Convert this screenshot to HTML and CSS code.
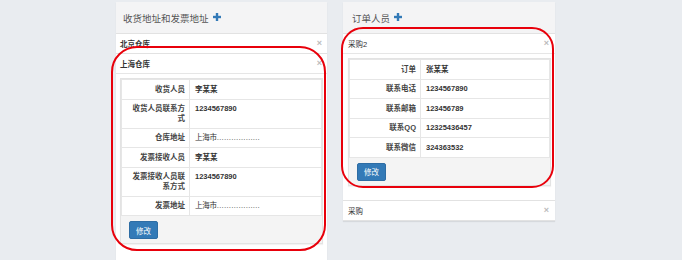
FILE: index.html
```html
<!DOCTYPE html>
<html lang="zh-CN">
<head>
<meta charset="UTF-8" />
<title>地址与订单人员</title>
<link rel="stylesheet" href="styles.css">
</head>
<body>
<div class="page">
  <section class="box box-left">
    <div class="box-header">
      <span>收货地址和发票地址</span>
      <svg class="plus" viewBox="0 0 8 8" width="8" height="8"><rect x="2.8" y="0" width="2.4" height="8"/><rect x="0" y="2.8" width="8" height="2.4"/></svg>
    </div>
    <div class="item">
      <div class="item-head"><span class="title">北京仓库</span><span class="close">×</span></div>
    </div>
    <div class="item open">
      <div class="item-head"><span class="title">上海仓库</span><span class="close">×</span></div>
      <div class="item-body">
        <div class="well">
          <table class="info">
            <tr><th>收货人员</th><td>李某某</td></tr>
            <tr><th>收货人员联系方式</th><td>1234567890</td></tr>
            <tr><th>仓库地址</th><td class="addr">上海市………………</td></tr>
            <tr><th>发票接收人员</th><td>李某某</td></tr>
            <tr><th>发票接收人员联系方式</th><td>1234567890</td></tr>
            <tr><th>发票地址</th><td class="addr">上海市………………</td></tr>
          </table>
          <div class="actions"><button class="btn">修改</button></div>
        </div>
      </div>
    </div>
  </section>

  <section class="box box-right">
    <div class="box-header">
      <span>订单人员</span>
      <svg class="plus" viewBox="0 0 8 8" width="8" height="8"><rect x="2.8" y="0" width="2.4" height="8"/><rect x="0" y="2.8" width="8" height="2.4"/></svg>
    </div>
    <div class="item open">
      <div class="item-head"><span class="title light">采购2</span><span class="close">×</span></div>
      <div class="item-body">
        <div class="well">
          <table class="info info-right">
            <tr><th>订单</th><td>张某某</td></tr>
            <tr><th>联系电话</th><td>1234567890</td></tr>
            <tr><th>联系邮箱</th><td>123456789</td></tr>
            <tr><th>联系QQ</th><td>12325436457</td></tr>
            <tr><th>联系微信</th><td>324363532</td></tr>
          </table>
          <div class="actions"><button class="btn">修改</button></div>
        </div>
      </div>
    </div>
    <div class="item spaced">
      <div class="item-head"><span class="title light">采购</span><span class="close">×</span></div>
    </div>
  </section>
</div>

<!-- Markierungen -->
<div class="mark mark-left"></div>
<div class="mark mark-right"></div>
</body>
</html>
```

FILE: styles.css
```css
body {
  margin: 0;
  background: #e9ecf0;
  font-family: "Liberation Sans", "Noto Sans CJK SC", sans-serif;
  color: #333;
  font-size: 7.5px;
  height: 260px;
  overflow: hidden;
}
.page {
  display: flex;
  align-items: flex-start;
  gap: 16px;
  padding: 2px 0 0 116px;
}
.box {
  background: #fff;
  box-shadow: 0 1px 1px rgba(0,0,0,0.08);
}
.box-left {
  width: 211px;
  min-height: 300px;
}
.box-right {
  width: 212px;
}
.box-header {
  height: 31px;
  background: #f4f4f5;
  display: flex;
  align-items: center;
  gap: 4px;
  padding: 0 7px;
  font-size: 9.5px;
  color: #555;
}
.box-right .box-header {
  padding: 0 9px;
}
.plus {
  fill: #337ab7;
  margin-top: -1px;
}
.item {
  border-top: 1px solid #e2e2e2;
}
.item.spaced {
  margin-top: 10px;
  border-bottom: 1px solid #e2e2e2;
}
.item-head {
  height: 19px;
  display: flex;
  align-items: center;
  justify-content: space-between;
  padding: 0 5px 0 4px;
}
.box-right .item-head {
  padding: 0 6px 0 5px;
}
.item.open .item-head {
  border-bottom: 1px solid #e6e6e6;
}
.title {
  font-weight: bold;
  color: #333;
}
.title.light {
  font-weight: normal;
}
.close {
  color: #bbb;
  font-weight: bold;
  font-size: 9px;
  line-height: 1;
}
.item-body {
  padding: 4px 4px 5px 4px;
}
.box-right .item-body {
  padding: 4px 4px 4px 5px;
}
.well {
  background: #f4f4f4;
  border: 1px solid #e3e3e3;
  box-shadow: 0 1px 1px rgba(0,0,0,0.05);
}
.info {
  width: 100%;
  border-collapse: collapse;
  background: #fff;
}
.info th, .info td {
  border: 1px solid #e6e6e6;
  padding: 4.5px 4px 4.5px 5px;
  line-height: 9.5px;
  font-weight: bold;
  vertical-align: top;
}
.info th {
  width: 57px;
  text-align: right;
  padding-left: 6px;
  color: #444;
}
.info-right th {
  width: 60px;
}
.info td {
  text-align: left;
  color: #333;
}
.info td.addr {
  font-weight: normal;
  letter-spacing: -0.3px;
}
.actions {
  padding: 5px 8px 4px;
}
.btn {
  background: #337ab7;
  color: #fff;
  border: 1px solid #2e6da4;
  border-radius: 2px;
  font-family: inherit;
  font-size: 7.5px;
  width: 29px;
  height: 18px;
  padding: 0;
}
.mark {
  position: absolute;
  border: 2px solid #e8000b;
  border-radius: 26px;
  pointer-events: none;
}
.mark-left {
  left: 111px;
  top: 46px;
  width: 211px;
  height: 201px;
}
.mark-right {
  left: 341px;
  top: 27px;
  width: 209px;
  height: 157px;
  border-radius: 22px;
}
```
